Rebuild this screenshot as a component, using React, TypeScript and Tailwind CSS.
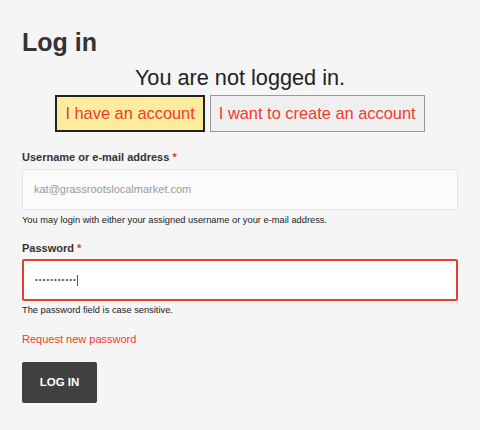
export default function App() {
  return (
    <div className="min-h-screen bg-[#f5f5f5] px-[22px] pt-[28px] font-['Liberation_Sans',Arial,sans-serif] text-[#333]">
      <h1 className="text-[25px] leading-[28px] font-bold text-[#333]">Log in</h1>

      <p className="mt-[10px] text-center text-[21.7px] leading-[24px] text-[#222]">
        You are not logged in.
      </p>

      <div className="mt-[5px] flex justify-center gap-[5px]">
        <button className="h-[37px] border-2 border-[#222] bg-[#fdec9c] px-[8px] text-[16.4px] text-[#ee3b2e]">
          I have an account
        </button>
        <button className="h-[37px] border border-[#999] bg-[#efefef] px-[8px] text-[16.4px] text-[#ee3b2e]">
          I want to create an account
        </button>
      </div>

      <form className="mt-[17px]" onSubmit={(e) => e.preventDefault()}>
        <label className="block text-[11px] leading-[16px] font-bold text-[#333]">
          Username or e-mail address <span className="text-[#e8332a]">*</span>
        </label>
        <div className="mt-[4px] flex h-[41px] items-center rounded-[2px] border border-[#e6e6e6] bg-[#fbfbfb] px-[11px] text-[11px] text-[#999]">
          kat@grassrootslocalmarket.com
        </div>
        <p className="mt-[4px] text-[9.3px] leading-[13px] text-[#222]">
          You may login with either your assigned username or your e-mail address.
        </p>

        <label className="mt-[13px] block text-[11px] leading-[16px] font-bold text-[#333]">
          Password <span className="text-[#e8332a]">*</span>
        </label>
        <div className="mt-[3px] flex h-[42px] items-center rounded-[2px] border-2 border-[#ea3d2f] bg-white px-[11px]">
          <span className="text-[8px] leading-none tracking-[1px] text-[#555]">•••••••••••</span>
          <span className="h-[11px] w-px bg-[#555]" />
        </div>
        <p className="mt-[3px] text-[9.3px] leading-[13px] text-[#222]">
          The password field is case sensitive.
        </p>

        <a href="#" className="mt-[14px] block text-[11px] leading-[16px] text-[#ee3b2e]">
          Request new password
        </a>

        <button
          type="submit"
          className="mt-[15px] h-[41px] w-[75px] rounded-[2px] bg-[#404040] text-[11.5px] font-bold text-white"
        >
          LOG IN
        </button>
      </form>
    </div>
  );
}
